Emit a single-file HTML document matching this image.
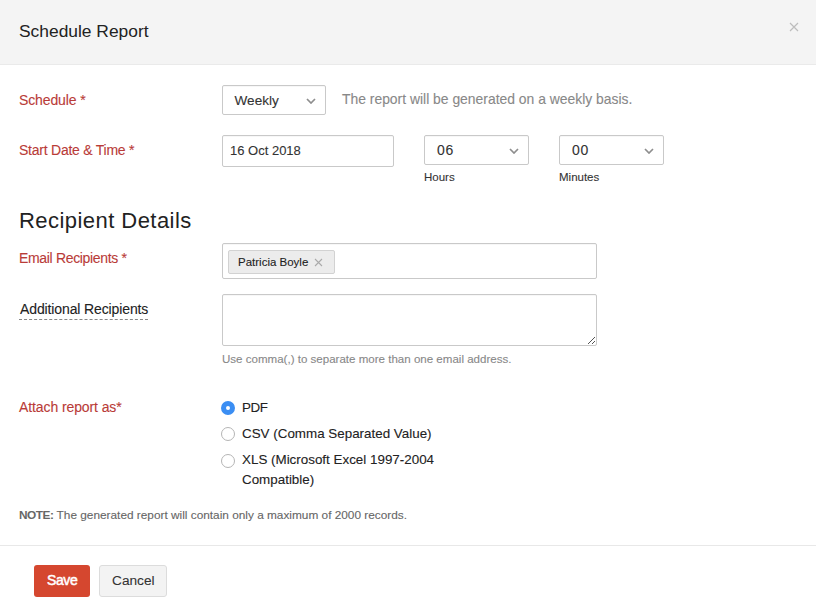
<!DOCTYPE html>
<html>
<head>
<meta charset="utf-8">
<style>
html,body{margin:0;padding:0;width:816px;height:611px;overflow:hidden;background:#fff;}
body{font-family:"Liberation Sans",sans-serif;position:relative;}
.t{position:absolute;white-space:nowrap;-webkit-text-stroke:0.1px currentColor;}
.hdr{position:absolute;left:0;top:0;width:816px;height:64px;background:#f4f4f4;border-bottom:1px solid #eaeaea;}
.lbl{color:#b93b38;font-size:14px;line-height:14px;}
.box{position:absolute;box-sizing:border-box;border:1px solid #c9c9c9;border-radius:2px;background:#fff;box-shadow:inset 0 1px 1px rgba(0,0,0,0.035);}
.val{color:#333;font-size:14px;line-height:14px;}
.chev{position:absolute;width:10px;height:6px;}
.small{color:#333;font-size:11.5px;line-height:12px;}
.radio{position:absolute;box-sizing:border-box;width:14px;height:14px;border-radius:50%;border:1px solid #b5b5b5;background:#fff;}
.rl{color:#222;font-size:13.4px;line-height:14px;}
</style>
</head>
<body>
<div class="hdr"></div>
<div class="t" style="left:19px;top:22px;font-size:17.4px;line-height:18px;color:#222;-webkit-text-stroke:0;">Schedule Report</div>
<svg style="position:absolute;left:789px;top:22px" width="10" height="10" viewBox="0 0 10 10"><path d="M1 1L9 9M9 1L1 9" stroke="#bdbdbd" stroke-width="1.2"/></svg>

<!-- Schedule -->
<div class="t lbl" style="left:19px;top:93px;letter-spacing:-0.12px;">Schedule *</div>
<div class="box" style="left:222px;top:85px;width:104px;height:30px;"></div>
<div class="t val" style="left:234.5px;top:94px;font-size:13.6px;">Weekly</div>
<svg class="chev" style="left:306px;top:98px" viewBox="0 0 10 6"><path d="M1 1L5 5L9 1" fill="none" stroke="#8e8e8e" stroke-width="1.7"/></svg>
<div class="t" style="left:342px;top:92px;font-size:13.9px;line-height:14px;color:#888;">The report will be generated on a weekly basis.</div>

<!-- Start date -->
<div class="t lbl" style="left:19px;top:143px;letter-spacing:-0.24px;">Start Date &amp; Time *</div>
<div class="box" style="left:222px;top:135px;width:172px;height:32px;"></div>
<div class="t val" style="left:230px;top:144px;font-size:13px;">16 Oct 2018</div>
<div class="box" style="left:424px;top:135px;width:105px;height:30px;"></div>
<div class="t val" style="left:437px;top:143px;letter-spacing:0.7px;">06</div>
<svg class="chev" style="left:509px;top:148px" viewBox="0 0 10 6"><path d="M1 1L5 5L9 1" fill="none" stroke="#8e8e8e" stroke-width="1.7"/></svg>
<div class="box" style="left:559px;top:135px;width:105px;height:30px;"></div>
<div class="t val" style="left:572px;top:143px;letter-spacing:0.7px;">00</div>
<svg class="chev" style="left:644px;top:148px" viewBox="0 0 10 6"><path d="M1 1L5 5L9 1" fill="none" stroke="#8e8e8e" stroke-width="1.7"/></svg>
<div class="t small" style="left:424px;top:171px;">Hours</div>
<div class="t small" style="left:559px;top:171px;">Minutes</div>

<!-- Recipient Details -->
<div class="t" style="left:19px;top:210px;font-size:22px;line-height:22px;letter-spacing:0.45px;color:#222;-webkit-text-stroke:0;">Recipient Details</div>
<div class="t lbl" style="left:19px;top:251px;letter-spacing:-0.33px;">Email Recipients *</div>
<div class="box" style="left:222px;top:243px;width:375px;height:36px;"></div>
<div style="position:absolute;box-sizing:border-box;left:228px;top:250px;width:107px;height:24px;background:#ececec;border:1px solid #d2d2d2;border-radius:2px;"></div>
<div class="t" style="left:238px;top:256px;font-size:11.5px;line-height:12px;color:#222;">Patricia Boyle</div>
<svg style="position:absolute;left:314px;top:258px" width="9" height="9" viewBox="0 0 9 9"><path d="M1 1L8 8M8 1L1 8" stroke="#aaa" stroke-width="1.1"/></svg>

<div class="t" style="left:20px;top:302px;font-size:14px;line-height:14px;letter-spacing:-0.12px;color:#222;">Additional Recipients</div>
<div style="position:absolute;left:19px;top:319px;width:129px;border-top:1px dashed #888;"></div>
<div class="box" style="left:222px;top:294px;width:375px;height:52px;"></div>
<svg style="position:absolute;left:586px;top:335px" width="10" height="10" viewBox="0 0 10 10"><path d="M9 2L2 9M9 6L6 9" stroke="#555" stroke-width="1"/></svg>
<div class="t" style="left:222px;top:353px;font-size:11.55px;line-height:12px;color:#888;">Use comma(,) to separate more than one email address.</div>

<!-- Attach -->
<div class="t lbl" style="left:19px;top:400px;letter-spacing:-0.1px;">Attach report as*</div>
<div class="radio" style="left:221px;top:401px;border:5px solid #3b8ef3;background:#fff;"></div>
<div class="t rl" style="left:242px;top:401px;letter-spacing:-0.4px;">PDF</div>
<div class="radio" style="left:221px;top:427px;"></div>
<div class="t rl" style="left:242px;top:427px;">CSV (Comma Separated Value)</div>
<div class="radio" style="left:221px;top:454px;"></div>
<div class="t rl" style="left:242px;top:453px;">XLS (Microsoft Excel 1997-2004</div>
<div class="t rl" style="left:242px;top:473px;">Compatible)</div>

<div class="t" style="left:19px;top:509px;font-size:11.83px;line-height:12px;color:#666;"><b style="font-weight:bold;color:#666;letter-spacing:-0.45px;-webkit-text-stroke:0">NOTE:</b> The generated report will contain only a maximum of 2000 records.</div>

<div style="position:absolute;left:0;top:545px;width:816px;height:1px;background:#e8e8e8;"></div>
<div style="position:absolute;left:34px;top:565px;width:56px;height:32px;background:#d5472f;border-radius:3px;"></div>
<div class="t" style="left:47px;top:573px;font-size:14px;line-height:14px;letter-spacing:-0.4px;color:#fff;-webkit-text-stroke:0.5px #fff;">Save</div>
<div style="position:absolute;box-sizing:border-box;left:99px;top:565px;width:68px;height:32px;background:#f3f3f3;border:1px solid #dcdcdc;border-radius:3px;"></div>
<div class="t" style="left:112px;top:574px;font-size:13.7px;line-height:14px;color:#333;">Cancel</div>
</body>
</html>
